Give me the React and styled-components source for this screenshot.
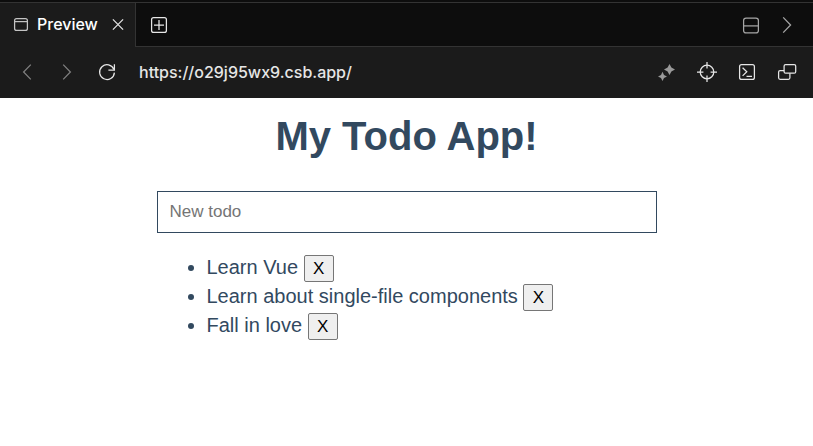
import React, { useState } from "react";
import styled, { createGlobalStyle } from "styled-components";

const GlobalStyle = createGlobalStyle`
  *, *::before, *::after { box-sizing: border-box; }
  body {
    margin: 0;
    background: #ffffff;
    color: #32495f;
    font-family: "Liberation Sans", Arial, sans-serif;
  }
`;

const Chrome = styled.header`
  background: #0d0d0d;
  padding-top: 2px;
  font-family: Inter, sans-serif;
`;

const TabBar = styled.div`
  display: flex;
  height: 45px;
  border-top: 1px solid #333333;
`;

const Tab = styled.div`
  display: flex;
  align-items: center;
  width: 136px;
  padding: 0 5px 2px 9px;
  background: #1b1b1b;
  border-right: 1px solid #333333;
`;

const TabLabel = styled.span`
  flex: 1;
  margin-left: 4px;
  color: #ffffff;
  font-size: 16px;
  font-weight: 500;
  line-height: 24px;
`;

const TabActions = styled.div`
  flex: 1;
  display: flex;
  align-items: center;
  justify-content: space-between;
  padding: 0 8px 0 5px;
  border-bottom: 1px solid #333333;
`;

const ActionGroup = styled.div`
  display: flex;
  align-items: center;
`;

const IconButton = styled.button`
  display: flex;
  align-items: center;
  justify-content: center;
  flex: none;
  width: ${({ $width = 40 }) => $width}px;
  height: 36px;
  padding: 0;
  border: 0;
  background: transparent;
  color: ${({ $tone = "#e6e6e6" }) => $tone};
`;

const Svg = styled.svg`
  display: block;
  flex: none;
  width: 24px;
  height: 24px;
  color: ${({ $tone = "inherit" }) => $tone};
`;

const AddressBar = styled.div`
  display: flex;
  align-items: center;
  height: 51px;
  padding: 0 6px 1px 7px;
  background: #1b1b1b;
`;

const Address = styled.input`
  flex: 1;
  min-width: 0;
  height: 32px;
  padding: 0 12px;
  border: 0;
  outline: 0;
  background: transparent;
  color: #e6e6e6;
  font-family: Inter, sans-serif;
  font-size: 16px;
  font-weight: 500;
`;

const Page = styled.main`
  max-width: 500px;
  margin: 0 auto;
  padding-top: 15px;
`;

const Title = styled.h1`
  margin: 0 0 32px;
  text-align: center;
  font-size: 40px;
  line-height: 46px;
`;

const TodoInput = styled.input`
  display: block;
  width: 100%;
  height: 42px;
  margin-bottom: 20px;
  padding: 0 12px;
  border: 1px solid #32495f;
  border-radius: 0;
  background: #ffffff;
  color: #32495f;
  font-family: inherit;
  font-size: 17px;
  &::placeholder { color: #757575; }
`;

const TodoList = styled.ul`
  margin: 0;
  padding-left: 50px;
  font-size: 20px;
  line-height: 29px;
`;

const TodoItem = styled.li`
  height: 29px;
`;

const RemoveButton = styled.button`
  width: 30px;
  height: 27px;
  padding: 0;
  border: 1px solid #767676;
  border-radius: 2px;
  background: #efefef;
  color: #000000;
  font-family: inherit;
  font-size: 17px;
  line-height: 25px;
`;

function Icon({ children, tone }) {
  return (
    <Svg viewBox="0 0 24 24" fill="none" stroke="currentColor" strokeWidth="1.25" $tone={tone} aria-hidden="true">
      {children}
    </Svg>
  );
}

const initialTodos = ["Learn Vue", "Learn about single-file components", "Fall in love"];

export default function App() {
  const [todos, setTodos] = useState(initialTodos);
  const [draft, setDraft] = useState("");

  const addTodo = (event) => {
    if (event.key === "Enter" && draft.trim()) {
      setTodos([...todos, draft.trim()]);
      setDraft("");
    }
  };

  return (
    <>
      <GlobalStyle />
      <Chrome>
        <TabBar>
          <Tab>
            <Icon tone="#c4c4c4">
              <rect x="5.6" y="6.6" width="12.8" height="11.8" rx="2" />
              <path d="M5.6 9.6h12.8" />
            </Icon>
            <TabLabel>Preview</TabLabel>
            <IconButton $width={24} aria-label="Close tab">
              <Icon><path d="M6.9 7.4l10.2 10.2M17.1 7.4L6.9 17.6" /></Icon>
            </IconButton>
          </Tab>
          <TabActions>
            <IconButton $width={36} aria-label="New tab">
              <Icon>
                <rect x="4.6" y="4.6" width="14.8" height="14.8" rx="2" />
                <path d="M12 7v10M7 12h10" />
              </Icon>
            </IconButton>
            <ActionGroup>
              <IconButton $width={36} $tone="#a6a6a6" aria-label="Split panel">
                <Icon>
                  <rect x="4.6" y="5.1" width="14.8" height="14.8" rx="2.5" />
                  <path d="M4.6 12.9h14.8" />
                </Icon>
              </IconButton>
              <IconButton $width={36} $tone="#a6a6a6" aria-label="Expand">
                <Icon><path d="M8.2 4.4l7.4 7.6-7.4 7.6" /></Icon>
              </IconButton>
            </ActionGroup>
          </TabActions>
        </TabBar>
        <AddressBar>
          <IconButton $tone="#808080" aria-label="Back">
            <Icon><path d="M15.8 4.6L8.6 12l7.2 7.4" /></Icon>
          </IconButton>
          <IconButton $tone="#808080" aria-label="Forward">
            <Icon><path d="M8.2 4.6l7.2 7.4-7.2 7.4" /></Icon>
          </IconButton>
          <IconButton aria-label="Reload">
            <Icon>
              <path d="M19.4 12.6A7.4 7.4 0 1 1 18.9 9.4" />
              <path d="M19.4 4.2v6h-6" />
            </Icon>
          </IconButton>
          <Address aria-label="Address" defaultValue="https://o29j95wx9.csb.app/" />
          <IconButton $tone="#999999" aria-label="Assistant">
            <Icon>
              <path fill="currentColor" stroke="none" d="M14.5 4L16.4 7.6L20 9.5L16.4 11.4L14.5 15L12.6 11.4L9 9.5L12.6 7.6ZM7.5 11.8L9 14.9L12 16.4L9 17.9L7.5 21L6 17.9L3 16.4L6 14.9Z" />
            </Icon>
          </IconButton>
          <IconButton aria-label="Inspect element">
            <Icon>
              <circle cx="12" cy="12" r="6.8" />
              <path d="M12 2v6.4M12 15.6V22M2 12h6.4M15.6 12H22" />
            </Icon>
          </IconButton>
          <IconButton aria-label="Console">
            <Icon>
              <rect x="4.6" y="4.6" width="14.8" height="14.8" rx="2" />
              <path d="M7.6 7.8l4.2 4-4.2 4.1M11.5 16.4h5.5" />
            </Icon>
          </IconButton>
          <IconButton aria-label="Open in new window">
            <Icon>
              <rect x="9.1" y="4.6" width="11.6" height="8.6" rx="1.5" />
              <path d="M9.1 10.6H5.1a1.5 1.5 0 0 0-1.5 1.5v5.7a1.5 1.5 0 0 0 1.5 1.5h8.3a1.5 1.5 0 0 0 1.5-1.5v-4.6" />
            </Icon>
          </IconButton>
        </AddressBar>
      </Chrome>
      <Page>
        <Title>My Todo App!</Title>
        <TodoInput
          aria-label="New todo"
          placeholder="New todo"
          value={draft}
          onChange={(event) => setDraft(event.target.value)}
          onKeyDown={addTodo}
        />
        <TodoList>
          {todos.map((todo, index) => (
            <TodoItem key={`${todo}-${index}`}>
              {todo}{" "}
              <RemoveButton
                aria-label={`Remove ${todo}`}
                onClick={() => setTodos(todos.filter((_, i) => i !== index))}
              >
                X
              </RemoveButton>
            </TodoItem>
          ))}
        </TodoList>
      </Page>
    </>
  );
}
